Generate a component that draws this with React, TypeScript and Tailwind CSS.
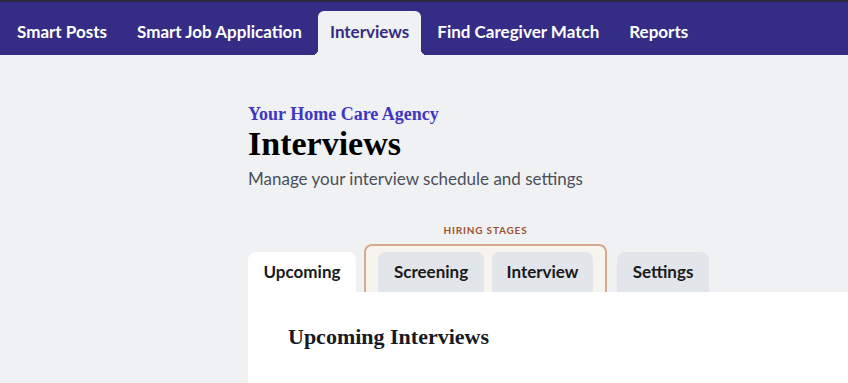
const navItems = ["Smart Posts", "Smart Job Application", "Interviews", "Find Caregiver Match", "Reports"];

export default function App() {
  return (
    <div className="min-h-[383px] w-[848px] overflow-hidden bg-[#f0f1f3] font-['Lato',sans-serif]">
      {/* Top nav */}
      <div className="border-t-2 border-[#2e2c3c] bg-[#352c85]">
        <nav className="flex h-[53px] items-end pl-[2px]">
          {navItems.map((item) => {
            const active = item === "Interviews";
            return (
              <div
                key={item}
                className={
                  active
                    ? "relative mx-[1px] flex h-[44px] items-center rounded-t-[6px] bg-[#f0f1f3] px-[12px] pb-[2px] text-[17px] font-bold text-[#352c85]"
                    : "flex h-[44px] items-center px-[15px] pb-[2px] text-[17px] font-bold text-white"
                }
              >
                {item}
                {active && (
                  <>
                    <span className="absolute bottom-0 left-[-6px] h-[6px] w-[6px] bg-[radial-gradient(circle_at_0_0,#352c85_6px,#f0f1f3_6.5px)]" />
                    <span className="absolute bottom-0 right-[-6px] h-[6px] w-[6px] bg-[radial-gradient(circle_at_100%_0,#352c85_6px,#f0f1f3_6.5px)]" />
                  </>
                )}
              </div>
            );
          })}
        </nav>
      </div>

      {/* Page body */}
      <div className="ml-[248px] w-[640px] pt-[49px]">
        <p className="font-['Liberation_Serif',serif] text-[18px] font-bold leading-[20px] text-[#3f37c0]">
          Your Home Care Agency
        </p>
        <h1 className="mt-[1px] font-['Liberation_Serif',serif] text-[34px] font-bold leading-[38px] text-black">
          Interviews
        </h1>
        <p className="mt-[5px] text-[17px] leading-[22px] text-[#4a4f5a]">
          Manage your interview schedule and settings
        </p>

        {/* Tabs */}
        <div className="mt-[33px] flex items-end">
          <div className="flex h-[40px] w-[108px] items-center justify-center rounded-t-[8px] bg-white text-[17px] font-bold text-[#1a1a1a]">
            Upcoming
          </div>
          <div className="ml-[8px] flex flex-col items-center">
            <span className="mb-[6px] text-[10px] font-bold tracking-[0.08em] text-[#a0522d]">HIRING STAGES</span>
            <div className="flex h-[48px] items-end gap-[8px] rounded-t-[8px] border-2 border-b-0 border-[#d8aa8d] bg-[#f7f3ee] px-[12px]">
              <div className="flex h-[40px] w-[106px] items-center justify-center rounded-t-[8px] bg-[#e2e5e9] text-[17px] font-bold text-[#1a1a1a]">
                Screening
              </div>
              <div className="flex h-[40px] w-[101px] items-center justify-center rounded-t-[8px] bg-[#e2e5e9] text-[17px] font-bold text-[#1a1a1a]">
                Interview
              </div>
            </div>
          </div>
          <div className="ml-[10px] flex h-[40px] w-[92px] items-center justify-center rounded-t-[8px] bg-[#e2e5e9] text-[17px] font-bold text-[#1a1a1a]">
            Settings
          </div>
        </div>

        {/* Card */}
        <div className="h-[120px] bg-white px-[40px] pt-[28px]">
          <h2 className="font-['Liberation_Serif',serif] text-[22px] font-bold text-[#161a24]">Upcoming Interviews</h2>
        </div>
      </div>
    </div>
  );
}
